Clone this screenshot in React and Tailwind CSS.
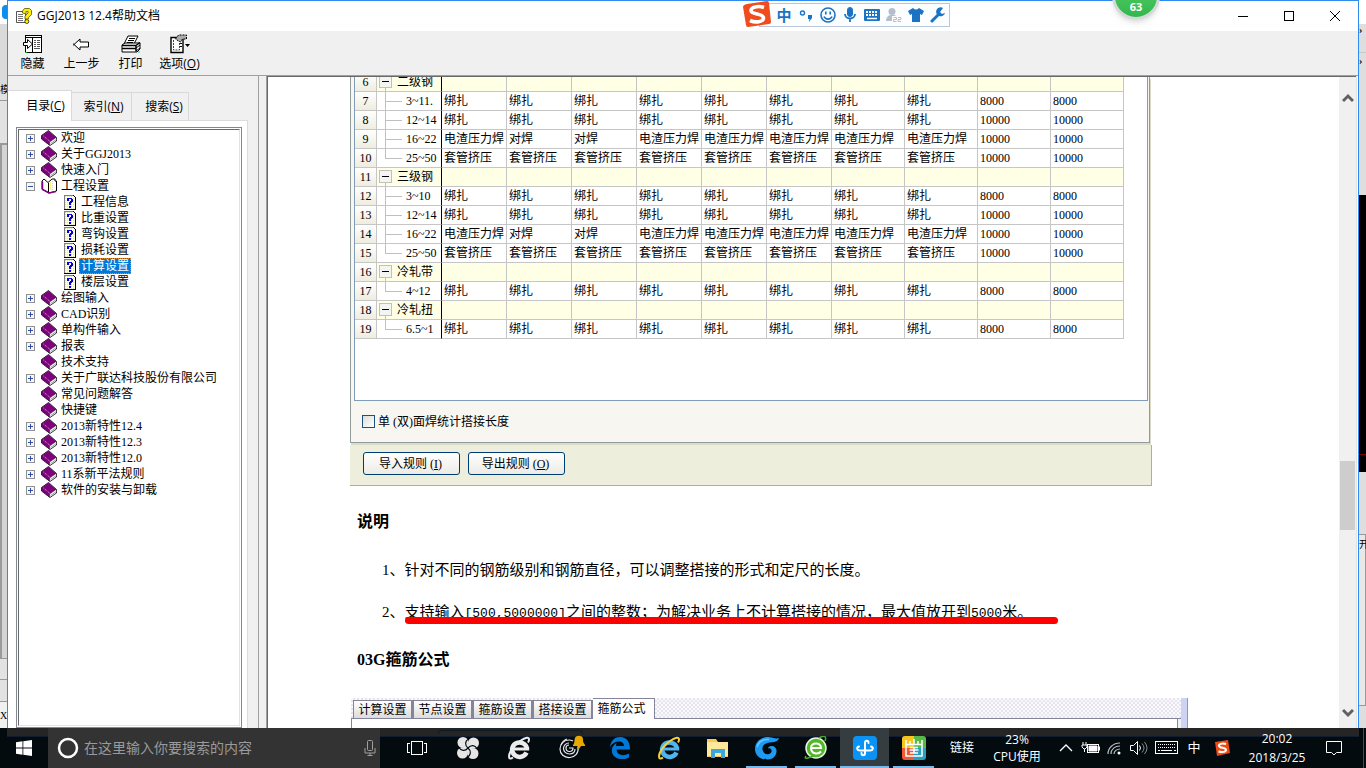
import React from 'react';

const treeItems = [
    { label: '欢迎', state: 'closed' },
    { label: '关于GGJ2013', state: 'closed' },
    { label: '快速入门', state: 'closed' },
    {
        label: '工程设置',
        state: 'open',
        children: ['工程信息', '比重设置', '弯钩设置', '损耗设置', '计算设置', '楼层设置'],
    },
    { label: '绘图输入', state: 'closed' },
    { label: 'CAD识别', state: 'closed' },
    { label: '单构件输入', state: 'closed' },
    { label: '报表', state: 'closed' },
    { label: '技术支持' },
    { label: '关于广联达科技股份有限公司', state: 'closed' },
    { label: '常见问题解答' },
    { label: '快捷键' },
    { label: '2013新特性12.4', state: 'closed' },
    { label: '2013新特性12.3', state: 'closed' },
    { label: '2013新特性12.0', state: 'closed' },
    { label: '11系新平法规则', state: 'closed' },
    { label: '软件的安装与卸载', state: 'closed' },
];

const TIE = ['绑扎', '绑扎', '绑扎', '绑扎', '绑扎', '绑扎', '绑扎', '绑扎'];
const WELD = ['电渣压力焊', '对焊', '对焊', '电渣压力焊', '电渣压力焊', '电渣压力焊', '电渣压力焊', '电渣压力焊'];
const SLEEVE = ['套管挤压', '套管挤压', '套管挤压', '套管挤压', '套管挤压', '套管挤压', '套管挤压', '套管挤压'];

const rows = [
    { no: 6, name: '二级钢', group: true },
    { no: 7, name: '3~11.', cells: TIE, len: 8000 },
    { no: 8, name: '12~14', cells: TIE, len: 10000 },
    { no: 9, name: '16~22', cells: WELD, len: 10000 },
    { no: 10, name: '25~50', cells: SLEEVE, len: 10000, last: true },
    { no: 11, name: '三级钢', group: true },
    { no: 12, name: '3~10', cells: TIE, len: 8000 },
    { no: 13, name: '12~14', cells: TIE, len: 10000 },
    { no: 14, name: '16~22', cells: WELD, len: 10000 },
    { no: 15, name: '25~50', cells: SLEEVE, len: 10000, last: true },
    { no: 16, name: '冷轧带', group: true },
    { no: 17, name: '4~12', cells: TIE, len: 8000, last: true },
    { no: 18, name: '冷轧扭', group: true },
    { no: 19, name: '6.5~1', cells: TIE, len: 8000, last: true },
];

const SIMSUN = "font-['Liberation_Serif','Noto_Sans_CJK_SC',serif]";
const YAHEI = "font-['Open_Sans','Noto_Sans_CJK_SC',sans-serif]";

function Book() {
    return (
        <svg className="w-4 h-4 shrink-0 block" viewBox="0 0 16 16">
            <path d="M7.500 0.500L15.500 7.500V11L9 15.500 0.500 9V5.500z" fill="#fff" stroke="#000" strokeWidth="0.800" />
            <path d="M7.500 1L15 7.500 8.500 12 1 5.500z" fill="#800080" stroke="#30003a" strokeWidth="0.500" />
            <path d="M0.800 5.500L8.500 12v3L0.800 9z" fill="#800080" stroke="#30003a" strokeWidth="0.500" />
            <path d="M9.500 13.500l6-4" stroke="#888" strokeWidth="0.800" />
            <path d="M2.500 6l6.500 5.500" stroke="#e0b0e0" strokeWidth="1" strokeDasharray="1 1" />
        </svg>
    );
}

function OpenBook() {
    return (
        <svg className="w-4 h-4 shrink-0 block" viewBox="0 0 16 16">
            <path d="M1 3l2-2 4 3.500L11 1h3v2h1.500v10L8 15 1 11z" fill="#fff" stroke="#000" />
            <path d="M1.500 3.500v8L8 15l7-1.500" fill="none" stroke="#800080" strokeWidth="1.500" />
            <path d="M7.500 5v9" stroke="#000" />
            <path d="M9.500 4.500v8M11.500 3v9" stroke="#ffe000" strokeWidth="1.200" strokeDasharray="1 1" />
        </svg>
    );
}

function HelpPage() {
    return (
        <svg className="w-3 h-4 shrink-0" viewBox="0 0 12 16" shapeRendering="crispEdges">
            <path d="M0 1h9l3 3v12H0z" fill="#000" />
            <path d="M0 1h9v1H1v13H0z" fill="#808080" />
            <path d="M1 2h8l2 2v11H1z" fill="#ffffe0" />
            <path d="M1.500 2v13M3.500 2v13M5.500 2v13M7.500 2v13M9.500 4v11" stroke="#fff200" strokeDasharray="1 1" />
            <path d="M3 4h5v1h1v3H8v1H7v2H5V8h1V7h1V5H5v2H3zM5 12h2v2H5z" fill="#0000f0" />
        </svg>
    );
}

function Expander({ open, label }) {
    return (
        <button aria-label={label} className="w-[9px] h-[9px] shrink-0 block">
            <svg className="w-[9px] h-[9px] block" viewBox="0 0 9 9" shapeRendering="crispEdges">
                <rect x="0.5" y="0.5" width="8" height="8" fill="#f6f6f6" stroke="#919191" />
                <path d={open ? 'M2 4.5h5' : 'M2 4.5h5M4.5 2v5'} stroke="#3050a8" />
            </svg>
        </button>
    );
}

function Sidebar() {
    return (
        <aside className="w-[250px] shrink-0 bg-[#f0f0f0] pt-[14px] flex flex-col">
            <div role="tablist" className="flex items-end relative z-10 text-xs leading-4">
                <button role="tab" aria-selected="true" className={`${YAHEI} w-[64px] h-[31px] pl-3 bg-white border-t border-r border-[#d9d9d9] -mb-px`}>
                    目录(<u>C</u>)
                </button>
                <button role="tab" aria-selected="false" className={`${YAHEI} w-[60px] h-7 pl-1 border-t border-r border-[#d9d9d9]`}>
                    索引(<u>N</u>)
                </button>
                <button role="tab" aria-selected="false" className={`${YAHEI} w-[57px] h-7 pl-2 border-t border-r border-[#d9d9d9] whitespace-nowrap`}>
                    搜索(<u>S</u>)
                </button>
            </div>
            <div className="flex-1 min-h-0 mr-[10px] bg-white border-t border-r border-[#dcdcdc] pt-[6px] pl-2 pr-[5px]">
                <div className="h-full border border-[#828790] p-px">
                    <ul className="h-full border border-t-[#696969] border-l-[#696969] border-r-[#e3e3e3] border-b-[#e3e3e3] overflow-hidden text-xs leading-4">
                        {treeItems.map((item) => (
                            <li key={item.label}>
                                <div className="h-4 pl-[7px] flex items-center">
                                    {item.state ? <Expander open={item.state === 'open'} label={item.label} /> : <span className="w-[9px]" />}
                                    <span className="ml-[6px] mr-[3px]">{item.state === 'open' ? <OpenBook /> : <Book />}</span>
                                    <a href="#" className="px-px whitespace-nowrap">{item.label}</a>
                                </div>
                                {item.children && (
                                    <ul>
                                        {item.children.map((child) => (
                                            <li key={child} className="h-4 pl-[45px] flex items-center gap-[3px]">
                                                <HelpPage />
                                                <a
                                                    href="#"
                                                    className={
                                                        child === '计算设置'
                                                            ? 'px-px h-4 leading-[14px] bg-[#0078d7] text-white border border-dotted border-[#e08a30]'
                                                            : 'px-0.5'
                                                    }
                                                >
                                                    {child}
                                                </a>
                                            </li>
                                        ))}
                                    </ul>
                                )}
                            </li>
                        ))}
                    </ul>
                </div>
            </div>
        </aside>
    );
}

function TreeCell({ row }) {
    if (row.group) {
        return (
            <div className="flex items-center">
                <svg className="w-5 h-[18px] shrink-0" viewBox="0 0 20 18" shapeRendering="crispEdges">
                    <path d="M8.5 15v3" stroke="#c0c0c0" />
                    <rect x="2.5" y="2.5" width="12" height="12" fill="#f4f4f2" stroke="#c0c0c0" />
                    <path d="M5 8.5h7" stroke="#000" />
                </svg>
                {row.name}
            </div>
        );
    }
    return (
        <div className="flex items-center">
            <svg className="w-[29px] h-[18px] shrink-0 overflow-visible" viewBox="0 0 29 18" shapeRendering="crispEdges">
                <path d={row.last ? 'M8.5 0v9' : 'M8.5 0v19'} stroke="#c0c0c0" />
                <path d="M8 9.5h17" stroke="#c0c0c0" />
            </svg>
            {row.name}
        </div>
    );
}

function RebarTable() {
    return (
        <table className="table-fixed w-[769px] border-separate border-spacing-0 -mt-1 text-xs leading-[18px]">
            <colgroup>
                <col className="w-[22px]" />
                <col className="w-[65px]" />
                <col className="w-[65px]" />
                <col className="w-[65px]" />
                <col className="w-[65px]" />
                <col className="w-[65px]" />
                <col className="w-[65px]" />
                <col className="w-[65px]" />
                <col className="w-[73px]" />
                <col className="w-[73px]" />
                <col className="w-[73px]" />
                <col className="w-[73px]" />
            </colgroup>
            <tbody>
                {rows.map((row) => (
                    <tr key={row.no} className={row.group ? 'bg-[#ffffe5]' : 'bg-white'}>
                        <th className="h-[19px] p-0 font-normal text-center bg-linear-to-b from-white to-[#efeddf] border-r border-b border-[#c6c6c6]">
                            {row.no}
                        </th>
                        <td className="h-[19px] p-0 overflow-hidden whitespace-nowrap border-r border-r-black border-b border-b-[#c6c6c6]">
                            <TreeCell row={row} />
                        </td>
                        {(row.cells || ['', '', '', '', '', '', '', '']).map((c, i) => (
                            <td key={i} className="h-[19px] p-0 pl-0.5 whitespace-nowrap border-r border-b border-[#c6c6c6]">
                                {c}
                            </td>
                        ))}
                        <td className="h-[19px] p-0 pl-0.5 border-r border-b border-[#c6c6c6]">{row.len}</td>
                        <td className="h-[19px] p-0 pl-0.5 border-r border-b border-[#c6c6c6]">{row.len}</td>
                    </tr>
                ))}
            </tbody>
        </table>
    );
}

function FormulaTabs() {
    return (
        <div className="w-[838px] mt-[26px] flex items-stretch h-[60px] shrink-0">
            <div className="flex-1 ml-px flex flex-col bg-[#f1f0f4]">
                <div className="flex items-end h-[21px] pl-[2px] text-xs leading-4 border-b border-[#84849a] bg-[repeating-conic-gradient(#e6e4ee_0_25%,#fbf9fc_0_50%)] bg-[length:4px_4px]">
                    {['计算设置', '节点设置', '箍筋设置', '搭接设置'].map((t) => (
                        <button key={t} className="w-[60px] h-[18px] pt-px border border-r-2 border-b-0 border-[#84849a] bg-linear-to-b from-white to-[#dcdcdc] whitespace-nowrap">
                            {t}
                        </button>
                    ))}
                    <button className="w-[62px] h-[21px] -mb-px pr-1 border border-b-0 border-l-0 border-[#84849a] bg-white whitespace-nowrap">箍筋公式</button>
                </div>
                <div className="flex-1 mr-[3px] bg-white border-l border-r border-[#84849a]" />
            </div>
            <div className="w-[7px] bg-[#cdd3f3] border-r border-[#45b5dc]" />
        </div>
    );
}

function Num({ children }) {
    return <span className="font-['Liberation_Mono',monospace] text-[13px] leading-none">{children}</span>;
}

function Article() {
    return (
        <article className="flex-1 min-w-0 bg-white pl-[82px] overflow-hidden">
            <div className="w-[800px] bg-[#f7f6f0] border-l border-r border-b border-[#919b9c] pl-[3px] pr-px shadow-[1px_2px_0_#dcdac8]">
                <div className="h-[324px] bg-white border border-t-0 border-[#7f9db9] overflow-hidden">
                    <RebarTable />
                </div>
                <label className="h-[41px] pl-2 flex items-center gap-[3px] text-xs leading-4">
                    <input type="checkbox" className="appearance-none w-[13px] h-[13px] border border-[#1c5180] bg-linear-to-br from-[#dcdcd7] to-white" />
                    单 (双)面焊统计搭接长度
                </label>
            </div>
            <div className="w-[802px] h-[41px] mt-0.5 pt-[7px] pl-[13px] flex gap-2 items-start bg-[#eeeedd] border-r border-b border-[#aeae9e] text-xs leading-4">
                <button className="w-[97px] h-[23px] pr-0.5 rounded-[3px] border border-[#003c74] bg-linear-to-b from-white to-[#ecebe5]">
                    导入规则 (<u>I</u>)
                </button>
                <button className="w-[97px] h-[23px] pr-0.5 rounded-[3px] border border-[#003c74] bg-linear-to-b from-white to-[#ecebe5]">
                    导出规则 (<u>O</u>)
                </button>
            </div>
            <h2 className="mt-6 pl-[7px] text-base leading-6 font-bold">说明</h2>
            <div className="pl-8 text-[15px] leading-6 whitespace-nowrap">
                <p className="mt-6">1、针对不同的钢筋级别和钢筋直径，可以调整搭接的形式和定尺的长度。</p>
                <p className="mt-[18px] relative">
                    2、支持输入<Num>[500,5000000]</Num>之间的整数；为解决业务上不计算搭接的情况，最大值放开到<Num>5000</Num>米。
                    <span className="absolute left-[23px] top-[17px] w-[653px] h-[7px] rounded-full bg-[#ff0000]" />
                </p>
            </div>
            <h2 className="mt-6 pl-[7px] text-base leading-6 font-bold">03G箍筋公式</h2>
            <FormulaTabs />
        </article>
    );
}

function Scrollbar() {
    return (
        <div className="w-[17px] shrink-0 bg-[#f0f0f0] px-px flex flex-col items-center">
            <svg className="w-3 h-[42px]" viewBox="0 0 12 42">
                <path d="M1 24l5-5 5 5" fill="none" stroke="#606060" strokeWidth="3" />
            </svg>
            <div className="h-[342px]" />
            <div className="w-full h-[69px] bg-[#cdcdcd]" />
            <svg className="w-3 h-8 mt-auto" viewBox="0 0 12 32">
                <path d="M1 14l5 5 5-5" fill="none" stroke="#606060" strokeWidth="3" />
            </svg>
        </div>
    );
}

function TitleBar() {
    return (
        <header className="h-[30px] shrink-0 bg-white flex items-center">
            <svg className="w-4 h-4 ml-2" viewBox="0 0 16 16">
                <path d="M0.5 3.5h9v11h-9z" fill="#fff" stroke="#555" />
                <path d="M2 6.5h5M2 8.5h5M2 10.5h5M2 12.5h5" stroke="#777" />
                <path d="M6.500 5V3l2-2.500h5l2 2v4l-3 3v1.500H9V8l3-3V3.500h-2V6z" fill="#ffee00" stroke="#555500" strokeWidth="0.8" />
                <circle cx="10.8" cy="13.5" r="2" fill="#ffee00" stroke="#222" strokeWidth="0.8" />
            </svg>
            <h1 className={`${YAHEI} ml-[5px] text-xs leading-4`}>GGJ2013 12.4帮助文档</h1>
            <div className="ml-auto flex h-full">
                <button aria-label="最小化" className="w-[46px] flex items-center justify-center">
                    <svg className="w-[10px] h-[10px]" viewBox="0 0 10 10" shapeRendering="crispEdges"><path d="M0 5.5h10" stroke="#000" /></svg>
                </button>
                <button aria-label="最大化" className="w-[46px] flex items-center justify-center">
                    <svg className="w-[10px] h-[10px]" viewBox="0 0 10 10" shapeRendering="crispEdges"><rect x="0.5" y="0.5" width="9" height="9" fill="none" stroke="#000" /></svg>
                </button>
                <button aria-label="关闭" className="w-[46px] flex items-center justify-center">
                    <svg className="w-[10px] h-[10px]" viewBox="0 0 10 10"><path d="M0 0l10 10M10 0L0 10" stroke="#000" /></svg>
                </button>
            </div>
        </header>
    );
}

function ToolButton({ icon, children }) {
    return (
        <button className="w-[49px] flex flex-col items-center whitespace-nowrap">
            {icon}
            <span className="mt-[2px]">{children}</span>
        </button>
    );
}

function Toolbar() {
    return (
        <div className={`${YAHEI} h-[44px] shrink-0 bg-[#f0f0f0] pt-[3px] flex text-xs leading-4`}>
            <ToolButton
                icon={
                    <svg className="w-5 h-5" viewBox="0 0 20 20" shapeRendering="crispEdges">
                        <path d="M2.5 1.5h16v17h-16z" fill="#fff" stroke="#000" />
                        <path d="M2 3.5h16M9.5 3v16" stroke="#000" />
                        <path d="M11 6.5h2M14 6.5h3M11 8.5h2M14 8.5h3M11 10.5h2M14 10.5h3M11 12.5h2M14 12.5h3M11 14.5h6" stroke="#555" />
                        <path d="M0.5 8.5h4v-3l5 4.5-5 4.5v-3h-4z" fill="#fff" stroke="#000" shapeRendering="auto" />
                        <path d="M2 18.500h2" stroke="#00c000" />
                    </svg>
                }
            >
                隐藏
            </ToolButton>
            <ToolButton
                icon={
                    <svg className="w-5 h-5" viewBox="0 0 20 20">
                        <path d="M2 10.5l6-5.5v3h8.500v5H8v3z" fill="#fff" stroke="#000" />
                        <path d="M1.5 9.5v2" stroke="#c00000" />
                    </svg>
                }
            >
                上一步
            </ToolButton>
            <ToolButton
                icon={
                    <svg className="w-5 h-5" viewBox="0 0 20 20">
                        <path d="M7 2h10l-4 8H3z" fill="#fff" stroke="#000" />
                        <path d="M8 4.5h6M7 6.5h6M6 8.5h6" stroke="#000" />
                        <path d="M1 11l3-2h15v6l-3 3H1z" fill="#fff" stroke="#000" />
                        <path d="M1 11.5h14v6M15 11.5l4-3M1 14.5h14" fill="none" stroke="#000" strokeWidth="1.5" />
                        <path d="M15 14l4-3M15 17l4-3" stroke="#000" />
                        <path d="M17 18h2" stroke="#00d0e0" />
                    </svg>
                }
            >
                打印
            </ToolButton>
            <ToolButton
                icon={
                    <svg className="w-5 h-5" viewBox="0 0 20 20">
                        <path d="M1 3.5h12v15H1z" fill="#fff" stroke="#000" strokeWidth="1.4" />
                        <path d="M3.5 6v10h6V8" fill="none" stroke="#444" strokeDasharray="2 1" />
                        <path d="M5.500 5l3-4h8v4h-4l-2 3-2-1z" fill="#aaa" stroke="#000" strokeDasharray="2 1" />
                        <path d="M10 9.5h2M10 12.5h2" stroke="#000" />
                        <path d="M15 10h5l-2.500 3z" fill="#000" />
                    </svg>
                }
            >
                选项(<u>O</u>)
            </ToolButton>
        </div>
    );
}

function ImeBar() {
    return (
        <div className="absolute left-[743px] top-px flex items-center text-[#1b73c4]">
            <svg className="w-7 h-7 relative z-10" viewBox="0 0 28 28">
                <path d="M4 3l20-3q2 0 2 2l2 19q0 2-2 2L5 26q-2 0-2-2L0 6q0-2 4-3z" fill="#f04c1d" />
                <path d="M21 6.500C15 4.500 8 6 8 9.500c0 4.500 12.500 2.500 12.500 7.500 0 4-8 5-13.500 2.500" fill="none" stroke="#fff" strokeWidth="3.600" />
            </svg>
            <div className="h-6 -ml-3 pl-4 w-[191px] flex items-center justify-between pr-[3px] bg-[#fbfdff] border border-[#b8c6dc]">
                <span className="w-4 text-center text-[15px] leading-5 font-bold font-['Noto_Sans_CJK_SC',sans-serif]">中</span>
                <svg className="w-4 h-4" viewBox="0 0 16 16">
                    <circle cx="4.500" cy="6" r="2" fill="none" stroke="currentColor" strokeWidth="1.400" />
                    <path d="M10 8h4v3l-3 4 .5-3H10z" fill="currentColor" />
                </svg>
                <svg className="w-4 h-4" viewBox="0 0 16 16" fill="none" stroke="currentColor" strokeWidth="1.600">
                    <circle cx="8" cy="8" r="7" />
                    <path d="M5.800 4.500v3M10.200 4.500v3M4 9.500c1.500 3.500 6.500 3.500 8 0" />
                </svg>
                <svg className="w-4 h-4" viewBox="0 0 16 16" fill="none" stroke="currentColor">
                    <rect x="5.500" y="0.500" width="5" height="9" rx="2.500" fill="currentColor" />
                    <path d="M3 7c0 6 10 6 10 0M8 12v3" strokeWidth="1.800" />
                </svg>
                <svg className="w-4 h-4" viewBox="0 0 16 16">
                    <rect y="2" width="16" height="12" rx="1" fill="currentColor" />
                    <path d="M2 5h12M2 8h12" stroke="#fff" strokeWidth="2" strokeDasharray="2 1" />
                    <path d="M3 11.500h10" stroke="#fff" strokeWidth="1.500" />
                </svg>
                <svg className="w-4 h-4" viewBox="0 0 16 16" fill="#b3bfce">
                    <circle cx="6" cy="4.500" r="3.500" />
                    <path d="M0 14c0-8 11-8 12-2v2z" />
                    <path d="M6 9h10v6H6z" fill="#fff" />
                    <path d="M7.500 10.500h3v2h-3v2h3M12 10.500h3v2h-3v2h3" fill="none" stroke="#b3bfce" />
                </svg>
                <svg className="w-4 h-4" viewBox="0 0 16 16">
                    <path d="M5 1q3 3 6 0l5 3-2 4-2-1v8H4V7L2 8 0 4z" fill="currentColor" />
                </svg>
                <svg className="w-4 h-4" viewBox="0 0 16 16">
                    <path d="M2 14l7-7" stroke="currentColor" strokeWidth="3" strokeLinecap="round" />
                    <path d="M13 1a4.500 4.500 0 1 0 2 5l-3 1-2-2z" fill="currentColor" />
                </svg>
            </div>
        </div>
    );
}

function Badge() {
    return (
        <div className={`${YAHEI} absolute left-[1112px] -top-7 w-12 h-12 rounded-full bg-linear-to-b from-[#5bd06b] to-[#2fb84c] border-[3px] border-[#d4d8d6] shadow-md flex items-end justify-center pb-0.5 text-white text-[11px] leading-4 font-bold`}>
            63
        </div>
    );
}

function IeLogo({ body, ring }) {
    return (
        <svg className="w-6 h-6" viewBox="0 0 24 24">
            <path d="M19.500 16.500A7.500 7.200 0 1 1 20 12.500" fill="none" stroke={body} strokeWidth="4.500" />
            <path d="M6 13h16.200" stroke={body} strokeWidth="3" />
            <path d="M6 21.500c-2 1.500-4 1.500-4-1C2 16 7 9 13 5s9-4 9-1.500c0 1-.4 2-1 3" fill="none" stroke={ring} strokeWidth="2" />
        </svg>
    );
}

function TaskButton({ wide, running, active, label, children }) {
    return (
        <button
            aria-label={label}
            className={`relative h-full shrink-0 flex items-center justify-center ${wide ? 'w-[51px]' : 'w-[49px]'} ${active ? 'bg-[#353d40]' : ''}`}
        >
            {children}
            {running && <span className={`absolute bottom-0 h-0.5 bg-[#76b9ed] ${active ? 'inset-x-0' : 'inset-x-1'}`} />}
        </button>
    );
}

function Taskbar() {
    return (
        <footer className={`${YAHEI} relative h-10 shrink-0 bg-[#030b0f] flex text-white`}>
            {/* window shadow showing through the bar */}
            <div className="absolute inset-x-[7px] top-0 h-[9px] bg-[#252525] border-b border-[#101c30] flex">
                <span className="ml-[431px] mt-[2px] w-[145px] h-1 border border-b-0 border-[#0c1c26] rounded-t-sm" />
            </div>
            <button aria-label="开始" className="relative w-12 shrink-0 flex items-center justify-center">
                <svg className="w-4 h-4" viewBox="0 0 16 16" fill="#fff">
                    <path d="M0 2.200L6.500 1.300v6.200H0zM7.300 1.200L16 0v7.500H7.300zM0 8.500h6.500v6.200L0 13.800zM7.300 8.500H16V16l-8.700-1.200z" />
                </svg>
            </button>
            <label className="relative w-[332px] shrink-0 bg-[#333333] flex items-center pl-[9px]">
                <svg className="w-[22px] h-[22px] shrink-0" viewBox="0 0 22 22"><circle cx="11" cy="11" r="9" fill="none" stroke="#fff" strokeWidth="2.500" /></svg>
                <input
                    type="text"
                    aria-label="搜索"
                    placeholder="在这里输入你要搜索的内容"
                    className="ml-[5px] flex-1 min-w-0 bg-transparent text-sm leading-5 outline-none placeholder:text-[#9a9a9a]"
                />
                <svg className="w-4 h-4 mr-0.5" viewBox="0 0 16 16" fill="none" stroke="#a0a0a0">
                    <rect x="5.500" y="0.500" width="5" height="10" rx="1" />
                    <path d="M3 8v5h10V8M8 13v3M5.500 15.500h5" />
                </svg>
            </label>
            <div className="relative ml-[11px] flex">
                <TaskButton wide label="任务视图">
                    <svg className="w-5 h-4" viewBox="0 0 20 16" fill="none" stroke="#fff" shapeRendering="crispEdges">
                        <rect x="4.500" y="1.500" width="11" height="13" />
                        <path d="M3 3.500H0.500v9H3M17 3.500h2.500v9H17" />
                    </svg>
                </TaskButton>
                <TaskButton wide label="应用">
                    <svg className="w-[22px] h-[22px]" viewBox="0 0 22 22" fill="#e6e6e6">
                        <circle cx="6" cy="5.500" r="5.500" />
                        <circle cx="16.500" cy="6" r="5.500" />
                        <circle cx="16" cy="16.500" r="5.500" />
                        <circle cx="5.500" cy="16" r="5.500" />
                        <path d="M7 7h8v8H7z" />
                        <path d="M11 11C7.500 8 8 4 11.500 2M11 11c3-3.500 7-3 9 .5M11 11c3.500 3 3 7-.5 9M11 11c-3 3.500-7 3-9-.5" fill="none" stroke="#030b0f" strokeWidth="1.200" />
                    </svg>
                </TaskButton>
                <TaskButton wide label="Internet Explorer">
                    <IeLogo body="#ececec" ring="#ececec" />
                </TaskButton>
                <TaskButton wide label="提醒">
                    <svg className="w-[30px] h-[30px] overflow-visible" viewBox="0 0 30 30" fill="none">
                        <path d="M23 14c1 6-3 10-8 10.500C9 25 5 21 5 16S9 7 14 7c2 0 3 .5 4 1" stroke="#e8e8e8" strokeWidth="1.200" />
                        <path d="M20 16c0 3-2 5-5.500 5S8.500 18.500 8.500 15.500 11 10 14 10M14 15h4c0 2-1 3.500-3.500 3.500S11 17 11 15s1.500-3 3-3M6 12c1-3 3-5 6-6" stroke="#e8e8e8" strokeWidth="1.200" />
                        <path d="M18 12c2-2 1-4 2-7s8-3 8 1 1 4 2 6v1H18zM22 13h4l-2 3z" fill="#e8a800" />
                    </svg>
                </TaskButton>
                <TaskButton label="Edge">
                    <svg className="w-[22px] h-[22px]" viewBox="0 0 22 22">
                        <path d="M1 10C2 3 6 0 11 0c7 0 10 5 10 12.500H7.500c.5 6 7 7 12.500 4v4C11 25 2 20 3 13c0-4 3-6 5-7-1 1-1 2-1 3h8c0-6-10-6-14 1z" fill="#0078d7" />
                    </svg>
                </TaskButton>
                <TaskButton label="IE">
                    <IeLogo body="#4fb4f0" ring="#f7d038" />
                </TaskButton>
                <TaskButton label="文件资源管理器">
                    <svg className="w-6 h-5" viewBox="0 0 24 20">
                        <path d="M1 1h9l2 3h10v15H1z" fill="#f5c95a" />
                        <path d="M1 4h21v14H1z" fill="#ffe79b" />
                        <path d="M5 11h14v9h-4v-5H9v5H5z" fill="#3aa8dc" />
                    </svg>
                </TaskButton>
                <TaskButton running label="浏览器">
                    <svg className="w-6 h-6" viewBox="0 0 24 24">
                        <path d="M24 2c-1 4-5 4-9 4.500-5 .5-8 3-7.500 7C8 17 11 19 14 18c2-.7 3-2 2.500-4-.5-1.500-2-2-3.500-1.500C13 9 21 9 21.500 14.500 22 20 17 24 12 23.500l-2-1-1 1C3 22 0 18 0 13 0 6 6 1 13 1c4 0 8 2.500 11 1z" fill="#1f9af2" />
                        <path d="M2 11C4 5 8 3 14 3.500" fill="none" stroke="#60c8ff" strokeWidth="1.500" />
                    </svg>
                </TaskButton>
                <TaskButton running label="360浏览器">
                    <svg className="w-6 h-6" viewBox="0 0 24 24">
                        <circle cx="12" cy="12" r="10" fill="#52b82a" stroke="#eaf7e2" strokeWidth="1.500" />
                        <path d="M17 15.500c-3 3.500-10 2.500-10-3.500s10-6 10 0H7" fill="none" stroke="#fff" strokeWidth="2" />
                        <path d="M2 20C-1 24 5 22 9 20M15 2c5-3 8-2 6 3" fill="none" stroke="#49a828" strokeWidth="1.500" />
                    </svg>
                </TaskButton>
                <TaskButton running active label="广联达">
                    <svg className="w-6 h-6" viewBox="0 0 24 24">
                        <rect width="24" height="24" rx="4" fill="#0a93f5" />
                        <path d="M15.500 7C15.500 4 12 4 12 7v10c0 3-3.500 3-3.500 0M6 10.500c-3 1-2 4 1 4h10c3 0 4-3 1-4" fill="none" stroke="#fff" strokeWidth="2" strokeLinecap="round" />
                    </svg>
                </TaskButton>
                <TaskButton running label="图">
                    <svg className="w-6 h-6" viewBox="0 0 24 24">
                        <path d="M0 3q0-3 3-3h9v12H0z" fill="#f7c51e" />
                        <path d="M12 0h9q3 0 3 3v9H12z" fill="#58b947" />
                        <path d="M0 12h12v12H3q-3 0-3-3z" fill="#ef5a35" />
                        <path d="M12 12h12v9q0 3-3 3h-9z" fill="#2b9fc0" />
                        <path d="M4 4v16h16V4M4 8.500h16M8 5v3M12 3v5M16 5v3M8 11.500h8M7.500 14h9M8 17h8M12 11v6" fill="none" stroke="#fff" strokeWidth="1.500" />
                    </svg>
                </TaskButton>
            </div>
            <div className="relative ml-auto mr-[4px] pr-[11px] border-r border-[#4a4a4a] flex items-center text-xs">
                <span className="w-12 text-center">链接</span>
                <span className="w-[62px] mr-[6px] text-center leading-[17px]">23%<br />CPU使用</span>
                <svg className="w-6 h-6" viewBox="0 0 24 24" fill="none" stroke="#fff" strokeWidth="1.300"><path d="M6 15l6-6 6 6" /></svg>
                <svg className="w-6 h-6" viewBox="0 0 24 24" fill="none" stroke="#fff">
                    <rect x="9.500" y="8.500" width="11" height="8" />
                    <path d="M11 10h8v5h-8z" fill="#fff" />
                    <path d="M21.500 10.500v4M5 6v3M8 6v3M4 9h5v2l-2 2H6l-2-2zM6.500 13v3" />
                </svg>
                <svg className="w-6 h-6" viewBox="0 0 24 24" fill="none" stroke="#bbb" strokeWidth="1.200">
                    <path d="M6 18C6 12 11 7 18 7M9 18c0-5 4-8 9-8M12 18c0-3 3-5 6-5" />
                    <circle cx="17" cy="17" r="1.500" fill="#fff" stroke="none" />
                </svg>
                <svg className="w-6 h-6" viewBox="0 0 24 24" fill="none" stroke="#fff">
                    <path d="M4.500 9.500h3l4-4v13l-4-4h-3z" />
                    <path d="M13.500 9.500q2 2.500 0 5" />
                    <path d="M16 7.500q4 4.500 0 9M18.500 6q5 6 0 12" stroke="#8a8a8a" />
                </svg>
                <svg className="w-8 h-6" viewBox="0 0 32 24" fill="none" stroke="#fff" shapeRendering="crispEdges">
                    <rect x="5.500" y="5.500" width="22" height="12" />
                    <path d="M8 8.500h18M8 11.500h18" strokeDasharray="1 1" />
                    <path d="M8 14.500h2M11 14.500h11M24 14.500h2" />
                </svg>
                <span className="w-6 text-center text-[13px]">中</span>
                <span className="w-8 flex justify-center">
                    <svg className="w-4 h-4" viewBox="0 0 16 16">
                        <path d="M1 2l13-2 2 13-13 3z" fill="#f04a14" />
                        <path d="M12 4C8 3 4.500 4 5 6c.5 2.500 7 1 7 4 0 2-4 2.500-7.500 1.500" fill="none" stroke="#fff" strokeWidth="2" />
                    </svg>
                </span>
                <span className="w-[78px] text-center leading-[19px]">20:02<br />2018/3/25</span>
                <button aria-label="通知" className="w-9 flex justify-center">
                    <svg className="w-4 h-4" viewBox="0 0 16 16" fill="none" stroke="#fff"><path d="M0.500 1.500h15v11h-5L8 15l-2.500-2.500h-5z" /></svg>
                </button>
            </div>
        </footer>
    );
}

// sliver of the application that sits behind the help window
function BehindLeft() {
    return (
        <div className="w-[7px] shrink-0 overflow-hidden bg-[#e2e2e2] flex flex-col text-[10px] leading-3">
            <div className="h-6 bg-white flex items-center"><span className="w-[14px] h-[14px] shrink-0 ml-0.5 rounded bg-[#0a8ef0]" /></div>
            <div className="h-[60px] bg-[#dadada]" />
            <div className="h-4 whitespace-nowrap">模</div>
            <div className="h-11 border-y border-[#9a9a9a]" />
            <div className="flex-1 border-t border-l-2 border-[#9a9a9a] bg-[#d4d4d4]" />
            <div className="h-[22px] border-y border-[#9a9a9a]" />
            <div className="h-[22px] border-b border-[#9a9a9a]" />
            <div className="h-[26px] pt-2 bg-[#f0f0f0]">X</div>
        </div>
    );
}

function BehindRight() {
    return (
        <div className="w-[7px] shrink-0 overflow-hidden bg-[#dedede] flex flex-col text-[10px] leading-3">
            <div className="h-6 bg-white" />
            <div className="h-[29px] font-bold border-b border-[#c8c8c8]">›</div>
            <div className="h-[142px] font-bold pt-[2px]">›</div>
            <div className="h-[260px] bg-black border-b border-[#800000]" />
            <div className="h-[17px] bg-black" />
            <div className="h-[62px]" />
            <div className="h-[172px] pt-1 border-y border-r border-[#9a9a9a] bg-[#e8e8e8] whitespace-nowrap">开</div>
        </div>
    );
}

export default function App() {
    return (
        <div className={`${SIMSUN} relative h-screen flex flex-col overflow-hidden text-black`}>
            <div className="flex-1 min-h-0 flex">
                <BehindLeft />
                <main className="flex-1 min-w-0 flex flex-col bg-white border border-b-0 border-[#2f8cee]">
                    <TitleBar />
                    <Toolbar />
                    <div className="flex-1 min-h-0 flex border-t border-[#a0a0a0]">
                        <Sidebar />
                        <div className="w-[9px] shrink-0 bg-[#f0f0f0] border-l border-r border-[#a0a0a0]" />
                        <div className="flex-1 min-w-0 flex border-t border-l border-[#696969]">
                            <Article />
                            <Scrollbar />
                        </div>
                        <div className="w-0.5 shrink-0 bg-white border-l border-[#e3e3e3]" />
                    </div>
                </main>
                <BehindRight />
            </div>
            <Taskbar />
            <ImeBar />
            <Badge />
        </div>
    );
}
